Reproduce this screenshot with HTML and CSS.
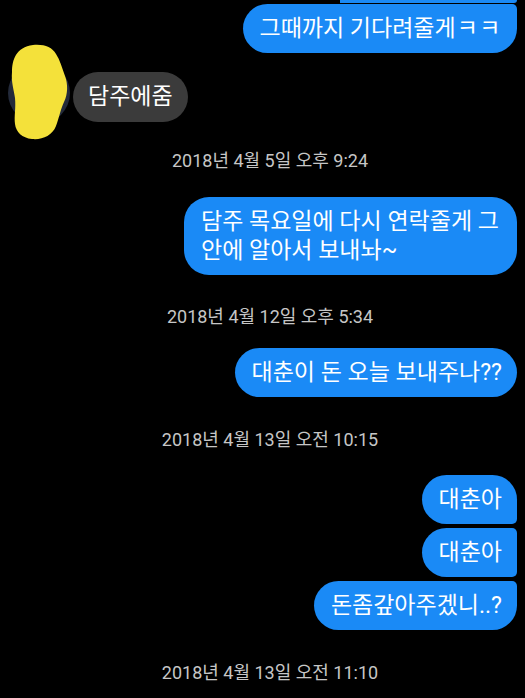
FILE: index.html
```html
<!DOCTYPE html>
<html lang="ko">
<head>
<meta charset="utf-8">
<link rel="stylesheet" href="styles.css">
</head>
<body>
<div class="chat">
  <div class="row out"><div class="strip"></div></div>
  <div class="row out gap1"><div class="bubble me first-cont">그때까지 기다려줄게<span class="kk">ㅋㅋ</span></div></div>

  <div class="row in">
    <svg class="avatar" width="62" height="50" viewBox="0 0 62 50" aria-hidden="true">
      <circle cx="33" cy="21" r="31" fill="#232a3a"/>
      <path d="M27 -27 C38 -28 46 -25 50 -18 C54 -12 56 -4 59 4 C62 12 62 22 58 30 C55 36 53 46 50 54 C46 64 36 68 26 67 C16 66 10 60 9 52 C8 44 10 36 9 26 C8 18 5 10 6 0 C6 -12 10 -25 27 -27 Z" fill="#f4e13a"/>
    </svg>
    <div class="bubble them">담주에줌</div>
  </div>

  <div class="stamp s1">2018년 4월 5일 오후 9:24</div>

  <div class="row out m26"><div class="bubble me wide">담주 목요일에 다시 연락줄게 그 안에 알아서 보내놔~</div></div>

  <div class="stamp s2">2018년 4월 12일 오후 5:34</div>

  <div class="row out m21"><div class="bubble me">대춘이 돈 오늘 보내주나??</div></div>

  <div class="stamp s3">2018년 4월 13일 오전 10:15</div>

  <div class="row out m25"><div class="bubble me g-first">대춘아</div></div>
  <div class="row out m4"><div class="bubble me g-mid">대춘아</div></div>
  <div class="row out m4"><div class="bubble me g-last">돈좀갚아주겠니..?</div></div>

  <div class="stamp s4">2018년 4월 13일 오전 11:10</div>
</div>
</body>
</html>
```

FILE: styles.css
```css
html, body {
  margin: 0;
  padding: 0;
  background: #000;
}
body {
  width: 525px;
  height: 698px;
  overflow: hidden;
  font-family: "Roboto", "Noto Sans CJK KR", sans-serif;
}
.chat {
  display: flex;
  flex-direction: column;
  padding-right: 8px;
}
.row {
  display: flex;
}
.row.out {
  justify-content: flex-end;
}
.row.in {
  align-items: flex-start;
  padding-left: 6px;
  gap: 5px;
  margin-top: 19px;
}
.strip {
  width: 177px;
  height: 3px;
  background: #1a8af6;
  border-radius: 0 0 5px 0;
}
.gap1 { margin-top: 1px; }
.m26 { margin-top: 26px; }
.m21 { margin-top: 21px; }
.m25 { margin-top: 25px; }
.m4 { margin-top: 4px; }

.avatar {
  overflow: visible;
  flex: none;
}
.bubble {
  font-size: 23px;
  line-height: 29px;
  color: #fff;
  padding: 10px 15px 10px 17px;
  border-radius: 25px;
  word-spacing: 0;
}
.kk {
  letter-spacing: 1.5px;
  padding-left: 1px;
}
.me {
  background: #1a8af6;
}
.them {
  background: #3b3b3b;
  padding: 10px 15px 11px 15px;
}
.wide {
  max-width: 302px;
  padding-left: 17px;
  padding-right: 14px;
}
.first-cont {
  border-top-right-radius: 5px;
}
.g-first {
  border-bottom-right-radius: 5px;
}
.g-mid {
  border-top-right-radius: 5px;
  border-bottom-right-radius: 5px;
}
.g-last {
  border-top-right-radius: 5px;
}
.stamp {
  text-align: center;
  color: #c6c6c6;
  font-size: 18px;
  line-height: 20px;
  padding-left: 23px;
}
.s1 { margin-top: 29px; }
.s2 { margin-top: 32px; }
.s3 { margin-top: 33px; }
.s4 { margin-top: 33px; }
```
